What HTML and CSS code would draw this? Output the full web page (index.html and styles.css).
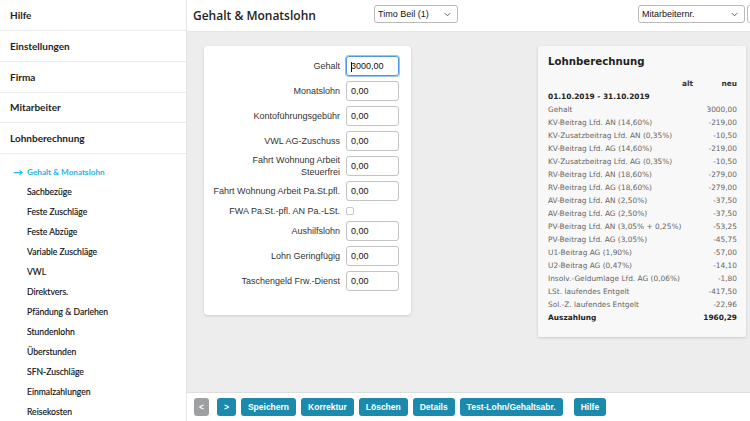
FILE: index.html
```html
<!DOCTYPE html>
<html lang="de">
<head>
<meta charset="utf-8">
<title>Gehalt &amp; Monatslohn</title>
<link rel="stylesheet" href="styles.css">
</head>
<body>
<aside class="sidebar">
  <div class="nav-top first">Hilfe</div>
  <div class="nav-top">Einstellungen</div>
  <div class="nav-top">Firma</div>
  <div class="nav-top">Mitarbeiter</div>
  <div class="nav-top">Lohnberechnung</div>
  <ul class="subnav">
    <li class="active"><span class="arrow">&rarr;</span>Gehalt &amp; Monatslohn</li>
    <li>Sachbezüge</li>
    <li>Feste Zuschläge</li>
    <li>Feste Abzüge</li>
    <li>Variable Zuschläge</li>
    <li>VWL</li>
    <li>Direktvers.</li>
    <li>Pfändung &amp; Darlehen</li>
    <li>Stundenlohn</li>
    <li>Überstunden</li>
    <li>SFN-Zuschläge</li>
    <li>Einmalzahlungen</li>
    <li>Reisekosten</li>
  </ul>
</aside>
<div class="main">
  <header class="topbar">
    <h1 class="title">Gehalt &amp; Monatslohn</h1>
    <div class="select sel-emp">Timo Beil (1)<svg class="chev" viewBox="0 0 8 5"><path d="M1 1l3 3 3-3" fill="none" stroke="#555" stroke-width="1.1"/></svg></div>
    <div class="spacer"></div>
    <div class="select sel-sort">Mitarbeiternr.<svg class="chev" viewBox="0 0 8 5"><path d="M1 1l3 3 3-3" fill="none" stroke="#555" stroke-width="1.1"/></svg></div>
    <div class="select sel-more"></div>
  </header>
  <section class="content">
    <div class="card form">
      <label class="lbl">Gehalt</label><div class="inp focus">3000,00</div>
      <label class="lbl">Monatslohn</label><div class="inp">0,00</div>
      <label class="lbl">Kontoführungsgebühr</label><div class="inp">0,00</div>
      <label class="lbl">VWL AG-Zuschuss</label><div class="inp">0,00</div>
      <label class="lbl">Fahrt Wohnung Arbeit<br>Steuerfrei</label><div class="inp">0,00</div>
      <label class="lbl">Fahrt Wohnung Arbeit Pa.St.pfl.</label><div class="inp">0,00</div>
      <label class="lbl">FWA Pa.St.-pfl. AN Pa.-LSt.</label><div class="chkcell"><span class="chk"></span></div>
      <label class="lbl">Aushilfslohn</label><div class="inp">0,00</div>
      <label class="lbl">Lohn Geringfügig</label><div class="inp">0,00</div>
      <label class="lbl">Taschengeld Frw.-Dienst</label><div class="inp">0,00</div>
    </div>
    <div class="panel">
      <h2 class="ptitle">Lohnberechnung</h2>
      <div class="hrow"><span></span><span>alt</span><span>neu</span></div>
      <div class="row bold"><span>01.10.2019 - 31.10.2019</span></div>
      <div class="row"><span>Gehalt</span><span>3000,00</span></div>
      <div class="row"><span>KV-Beitrag Lfd. AN (14,60%)</span><span>-219,00</span></div>
      <div class="row"><span>KV-Zusatzbeitrag Lfd. AN (0,35%)</span><span>-10,50</span></div>
      <div class="row"><span>KV-Beitrag Lfd. AG (14,60%)</span><span>-219,00</span></div>
      <div class="row"><span>KV-Zusatzbeitrag Lfd. AG (0,35%)</span><span>-10,50</span></div>
      <div class="row"><span>RV-Beitrag Lfd. AN (18,60%)</span><span>-279,00</span></div>
      <div class="row"><span>RV-Beitrag Lfd. AG (18,60%)</span><span>-279,00</span></div>
      <div class="row"><span>AV-Beitrag Lfd. AN (2,50%)</span><span>-37,50</span></div>
      <div class="row"><span>AV-Beitrag Lfd. AG (2,50%)</span><span>-37,50</span></div>
      <div class="row"><span>PV-Beitrag Lfd. AN (3,05% + 0,25%)</span><span>-53,25</span></div>
      <div class="row"><span>PV-Beitrag Lfd. AG (3,05%)</span><span>-45,75</span></div>
      <div class="row"><span>U1-Beitrag AG (1,90%)</span><span>-57,00</span></div>
      <div class="row"><span>U2-Beitrag AG (0,47%)</span><span>-14,10</span></div>
      <div class="row"><span>Insolv.-Geldumlage Lfd. AG (0,06%)</span><span>-1,80</span></div>
      <div class="row"><span>LSt. laufendes Entgelt</span><span>-417,50</span></div>
      <div class="row"><span>Sol.-Z. laufendes Entgelt</span><span>-22,96</span></div>
      <div class="row bold"><span>Auszahlung</span><span>1960,29</span></div>
    </div>
  </section>
  <footer class="actions">
    <button class="btn gray">&lt;</button>
    <button class="btn">&gt;</button>
    <button class="btn">Speichern</button>
    <button class="btn">Korrektur</button>
    <button class="btn">Löschen</button>
    <button class="btn">Details</button>
    <button class="btn">Test-Lohn/Gehaltsabr.</button>
    <button class="btn help">Hilfe</button>
  </footer>
</div>
</body>
</html>
```

FILE: styles.css
```css
html, body {
  margin: 0;
  padding: 0;
}
body {
  width: 750px;
  height: 421px;
  overflow: hidden;
  display: flex;
  background: #fff;
  font-family: "Liberation Sans", Arial, sans-serif;
  color: #222;
}

/* Sidebar */
.sidebar {
  width: 187px;
  flex: none;
  box-sizing: border-box;
  border-right: 1px solid #e4e4e4;
  background: #fff;
  font-family: Lato, "Open Sans", sans-serif;
}
.nav-top {
  height: 29.6px;
  border-bottom: 1px solid #ececec;
  display: flex;
  align-items: center;
  padding-left: 10px;
  font-size: 10px;
  font-weight: 700;
  color: #1e1e1e;
}
.nav-top.first {
  height: 30.4px;
}
.subnav {
  list-style: none;
  margin: 0;
  padding: 8px 0 0 0;
}
.subnav li {
  height: 20px;
  display: flex;
  align-items: center;
  padding-left: 27px;
  font-size: 8.6px;
  color: #111;
  position: relative;
  -webkit-text-stroke: 0.15px #111;
}
.subnav li.active {
  color: #27b3e6;
  font-weight: 700;
  font-size: 8.2px;
  -webkit-text-stroke: 0;
}
.arrow {
  position: absolute;
  left: 13px;
  font-size: 10px;
  font-weight: 700;
}

/* Main */
.main {
  flex: 1;
  display: flex;
  flex-direction: column;
  min-width: 0;
}
.topbar {
  height: 32px;
  flex: none;
  box-sizing: border-box;
  border-bottom: 1px solid #e6e6e6;
  display: flex;
  align-items: flex-start;
  overflow: hidden;
  background: #fff;
}
.title {
  margin: 0;
  width: 181px;
  flex: none;
  padding-left: 6px;
  line-height: 31px;
  font-family: "Open Sans", sans-serif;
  font-weight: 600;
  font-size: 12px;
  color: #222;
}
.select {
  flex: none;
  margin-top: 5px;
  height: 18px;
  box-sizing: border-box;
  border: 1px solid #b9b9b9;
  border-radius: 3px;
  display: flex;
  align-items: center;
  justify-content: space-between;
  padding: 0 6px 0 3px;
  font-size: 9px;
  color: #111;
  background: #fff;
}
.chev {
  width: 7px;
  height: 5px;
}
.sel-emp { width: 84px; }
.spacer { flex: 1; }
.sel-sort { width: 107px; }
.sel-more { width: 10px; margin-left: 2px; margin-right: -8px; }

.content {
  flex: 1;
  background: #ededed;
  display: flex;
  justify-content: space-between;
  align-items: flex-start;
  padding: 14px 4px 0 17px;
}

/* Form card */
.card {
  width: 207px;
  height: 269px;
  box-sizing: border-box;
  background: #fff;
  border-radius: 4px;
  box-shadow: 0 1px 3px rgba(0,0,0,0.14);
}
.form {
  display: grid;
  grid-template-columns: 1fr 53px;
  grid-template-rows: repeat(6, 20px) 10px repeat(3, 20px);
  column-gap: 6px;
  row-gap: 5px;
  padding: 10px 12px 0 6px;
  align-content: start;
}
.lbl {
  align-self: center;
  text-align: right;
  font-size: 9px;
  line-height: 12px;
  color: #333;
  white-space: nowrap;
}
.inp {
  box-sizing: border-box;
  height: 20px;
  border: 1px solid #c3c3c3;
  border-radius: 3px;
  display: flex;
  align-items: center;
  padding-left: 4px;
  font-size: 9px;
  color: #111;
}
.inp.focus {
  border: 1px solid #4f95e6;
  box-shadow: 0 0 0 1px #9cc3f0;
  position: relative;
}
.inp.focus::before {
  content: "";
  position: absolute;
  left: 4px;
  top: 5px;
  width: 1px;
  height: 10px;
  background: #111;
}
.chkcell {
  display: flex;
  align-items: center;
}
.chk {
  width: 6px;
  height: 6px;
  border: 1px solid #c8c8c8;
  border-radius: 2px;
  background: #fff;
}

/* Panel */
.panel {
  width: 208px;
  height: 291px;
  box-sizing: border-box;
  background: #f8f8f8;
  border-radius: 2px;
  box-shadow: 0 1px 3px rgba(0,0,0,0.14);
  padding: 8px 9px 0 10px;
  font-family: "DejaVu Sans", Verdana, sans-serif;
  font-size: 7.4px;
  color: #666;
}
.ptitle {
  margin: 0 0 7px 0;
  height: 16px;
  line-height: 16px;
  font-size: 10.2px;
  font-weight: 700;
  color: #222;
}
.hrow {
  display: grid;
  grid-template-columns: 1fr 44px 44px;
  height: 13px;
  line-height: 13px;
  font-weight: 700;
  color: #333;
  text-align: right;
}
.row {
  display: flex;
  justify-content: space-between;
  height: 13px;
  line-height: 13px;
  white-space: nowrap;
}
.row.bold {
  font-weight: 700;
  color: #222;
}

/* Footer */
.actions {
  height: 29px;
  flex: none;
  box-sizing: border-box;
  border-top: 1px solid #dedede;
  background: #fff;
  display: flex;
  align-items: center;
  gap: 5px;
  padding: 0 0 0 7px;
}
.btn {
  height: 18px;
  border: none;
  border-radius: 3px;
  background: #1b8aac;
  color: #fff;
  font-family: "Liberation Sans", Arial, sans-serif;
  font-weight: 700;
  font-size: 8.5px;
  padding: 0 7px;
  margin: 0;
}
.btn.gray {
  background: #9d9fa1;
  padding: 0 5px;
  margin-right: 3px;
}
.btn.help {
  margin-left: 6px;
}
```
